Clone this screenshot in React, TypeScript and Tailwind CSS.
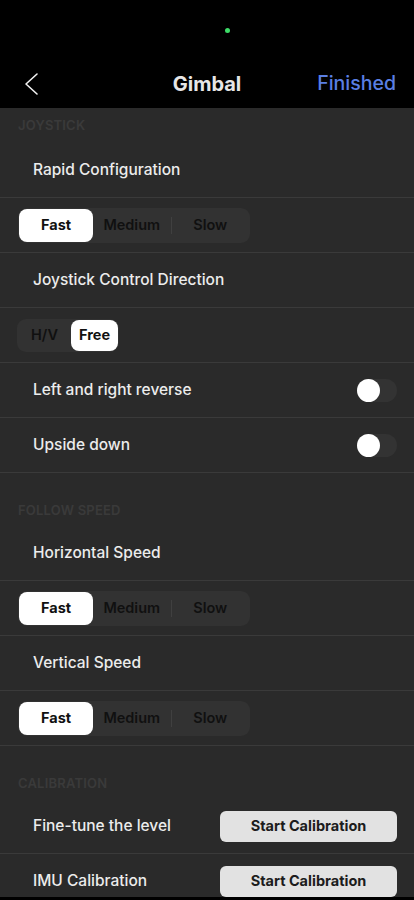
import React from "react";

const font = { fontFamily: "Inter, 'Noto Sans', sans-serif" };

function Divider() {
  return <div className="h-px w-full bg-[#3a3a3a]" />;
}

function SectionHeader({ title, first }: { title: string; first?: boolean }) {
  return (
    <div className={`${first ? "h-[35px] pt-[9px]" : "h-[53px] pt-[29px]"} px-[18px]`}>
      <div className="text-[13px] font-semibold leading-[16px] tracking-[0.2px] text-[#3a3a3a]">{title}</div>
    </div>
  );
}

function LabelRow({ label, children }: { label: string; children?: React.ReactNode }) {
  return (
    <div className="flex h-[54px] items-center justify-between pl-[33px] pr-[17px]">
      <span className="text-[15.5px] font-medium text-[#ececec]">{label}</span>
      {children}
    </div>
  );
}

function Segmented3() {
  return (
    <div className="flex h-[54px] items-center px-[18px]">
      <div className="flex h-[35px] w-[232px] items-center rounded-[9px] bg-[#323232] p-px">
        <div className="flex h-[33px] w-[74px] items-center justify-center rounded-[8px] bg-white text-[14.5px] font-bold text-[#111]">
          Fast
        </div>
        <div className="flex h-[33px] flex-1 items-center justify-center text-[14.5px] font-semibold text-[#101010]">
          Medium
        </div>
        <div className="h-[17px] w-px bg-[#404040]" />
        <div className="flex h-[33px] flex-1 items-center justify-center text-[14.5px] font-semibold text-[#101010]">
          Slow
        </div>
      </div>
    </div>
  );
}

function Toggle() {
  return (
    <div className="flex h-[23px] w-[40px] items-center rounded-full bg-[#333333]">
      <div className="h-[23px] w-[23px] rounded-full bg-white" />
    </div>
  );
}

function CalButton() {
  return (
    <div className="flex h-[31px] w-[177px] items-center justify-center rounded-[6px] bg-[#e2e2e2] text-[14.5px] font-bold text-[#1c1c1c]">
      Start Calibration
    </div>
  );
}

export default function App() {
  return (
    <div className="flex h-[900px] w-[414px] flex-col overflow-hidden bg-black" style={font}>
      <div className="relative h-[108px] shrink-0">
        <div className="absolute left-[225px] top-[28px] h-[5px] w-[5px] rounded-full bg-[#3ddc68]" />
        <div className="absolute left-0 right-0 top-[62px] flex h-[44px] items-center justify-between pl-[22px] pr-[18px]">
          <svg width="18" height="24" viewBox="0 0 18 24" fill="none">
            <path d="M15 2 L4 12 L15 22" stroke="#f2f2f2" strokeWidth="1.6" strokeLinecap="round" strokeLinejoin="round" />
          </svg>
          <span className="absolute left-1/2 -translate-x-1/2 text-[20px] font-bold text-[#e6e6e6]">Gimbal</span>
          <span className="text-[19.5px] font-medium text-[#5a7fe4]">Finished</span>
        </div>
      </div>

      <div className="h-[789px] shrink-0 overflow-hidden bg-[#2a2a2a]">
        <SectionHeader title="JOYSTICK" first />
        <LabelRow label="Rapid Configuration" />
        <Divider />
        <Segmented3 />
        <Divider />
        <LabelRow label="Joystick Control Direction" />
        <Divider />
        <div className="flex h-[54px] items-center px-[17px]">
          <div className="flex h-[33px] w-[102px] items-center rounded-[9px] bg-[#323232] p-px">
            <div className="flex h-[31px] w-[53px] items-center justify-center text-[14.5px] font-semibold text-[#101010]">H/V</div>
            <div className="flex h-[31px] w-[47px] items-center justify-center rounded-[8px] bg-white text-[14.5px] font-bold text-[#111]">
              Free
            </div>
          </div>
        </div>
        <Divider />
        <LabelRow label="Left and right reverse">
          <Toggle />
        </LabelRow>
        <Divider />
        <LabelRow label="Upside down">
          <Toggle />
        </LabelRow>
        <Divider />
        <SectionHeader title="FOLLOW SPEED" />
        <LabelRow label="Horizontal Speed" />
        <Divider />
        <Segmented3 />
        <Divider />
        <LabelRow label="Vertical Speed" />
        <Divider />
        <Segmented3 />
        <Divider />
        <SectionHeader title="CALIBRATION" />
        <LabelRow label="Fine-tune the level">
          <CalButton />
        </LabelRow>
        <Divider />
        <LabelRow label="IMU Calibration">
          <CalButton />
        </LabelRow>
      </div>
    </div>
  );
}
